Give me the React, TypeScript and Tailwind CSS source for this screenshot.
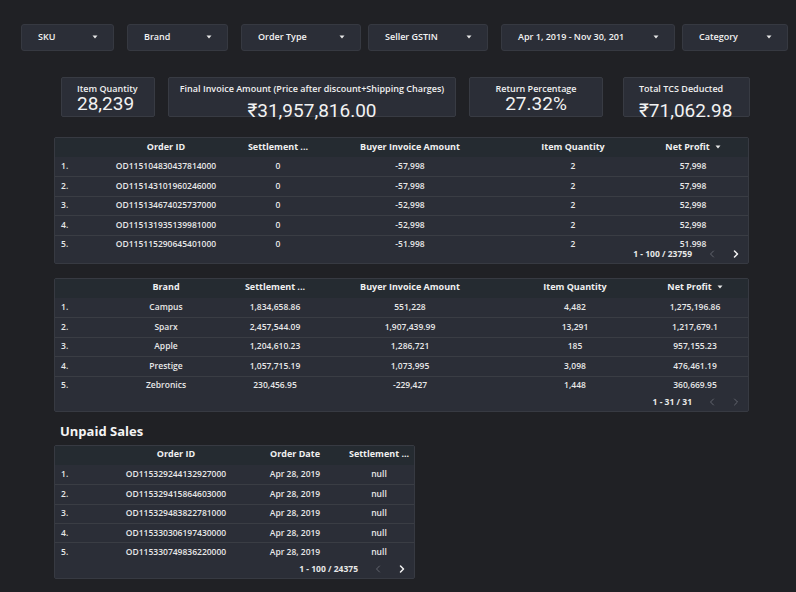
import { ChevronLeft, ChevronRight } from "lucide-react";

type Col = { label: string; w: string; sort?: boolean };

const filters = [
  { label: "SKU", w: "w-[93px]", ml: "ml-[21px]" },
  { label: "Brand", w: "w-[101px]", ml: "ml-[13px]" },
  { label: "Order Type", w: "w-[120px]", ml: "ml-[13px]" },
  { label: "Seller GSTIN", w: "w-[120px]", ml: "ml-[7px]" },
  { label: "Apr 1, 2019 - Nov 30, 201", w: "w-[174px]", ml: "ml-[13px]" },
  { label: "Category", w: "w-[106px]", ml: "ml-[7px]" }
];

const orderCols: Col[] = [
  { label: "", w: "w-[46px]" },
  { label: "Order ID", w: "w-[130px]" },
  { label: "Settlement ...", w: "w-[94px]" },
  { label: "Buyer Invoice Amount", w: "w-[170px]" },
  { label: "Item Quantity", w: "w-[156px]" },
  { label: "Net Profit", w: "w-[84px]", sort: true }
];

const orderRows = [
  ["OD115104830437814000", "0", "-57,998", "2", "57,998"],
  ["OD115143101960246000", "0", "-57,998", "2", "57,998"],
  ["OD115134674025737000", "0", "-52,998", "2", "52,998"],
  ["OD115131935139981000", "0", "-52,998", "2", "52,998"],
  ["OD115115290645401000", "0", "-51.998", "2", "51.998"]
];

const brandCols: Col[] = [
  { label: "", w: "w-[46px]" },
  { label: "Brand", w: "w-[130px]" },
  { label: "Settlement ...", w: "w-[88px]" },
  { label: "Buyer Invoice Amount", w: "w-[182px]" },
  { label: "Item Quantity", w: "w-[148px]" },
  { label: "Net Profit", w: "w-[92px]", sort: true }
];

const brandRows = [
  ["Campus", "1,834,658.86", "551,228", "4,482", "1,275,196.86"],
  ["Sparx", "2,457,544.09", "1,907,439.99", "13,291", "1,217,679.1"],
  ["Apple", "1,204,610.23", "1,286,721", "185", "957,155.23"],
  ["Prestige", "1,057,715.19", "1,073,995", "3,098", "476,461.19"],
  ["Zebronics", "230,456.95", "-229,427", "1,448", "360,669.95"]
];

const unpaidCols: Col[] = [
  { label: "", w: "w-[56px]" },
  { label: "Order ID", w: "w-[130px]" },
  { label: "Order Date", w: "w-[108px]" },
  { label: "Settlement ...", w: "w-[60px]" }
];

const unpaidRows = [
  ["OD115329244132927000", "Apr 28, 2019", "null"],
  ["OD115329415864603000", "Apr 28, 2019", "null"],
  ["OD115329483822781000", "Apr 28, 2019", "null"],
  ["OD115330306197430000", "Apr 28, 2019", "null"],
  ["OD115330749836220000", "Apr 28, 2019", "null"]
];

function Caret() {
  return (
    <svg width="6" height="4" viewBox="0 0 6 4" className="shrink-0">
      <path d="M0.5 0.5h5L3 3.5z" fill="#e8e8e8" />
    </svg>
  );
}

function Pager({ text, next, overlap }: { text: string; next: boolean; overlap?: boolean }) {
  return (
    <div
      className={[
        "flex items-center justify-end pr-[6px] text-[8.5px] font-bold leading-[10px] text-[#e8e8e8]",
        overlap ? "-mt-[5px] mb-[4px] h-[10px]" : "h-[16px] pb-[1px]"
      ].join(" ")}
    >
      <span>{text}</span>
      <ChevronLeft size={12} strokeWidth={2} className="ml-[14px] text-[#62656e]" />
      <ChevronRight
        size={12}
        strokeWidth={next ? 3 : 2}
        className={["ml-[12px]", next ? "text-[#f2f2f2]" : "text-[#62656e]"].join(" ")}
      />
    </div>
  );
}

function DataTable({
  cols,
  rows,
  width,
  pager,
  next,
  overlap
}: {
  cols: Col[];
  rows: string[][];
  width: string;
  pager: string;
  next: boolean;
  overlap?: boolean;
}) {
  return (
    <div className={["rounded-[2px] border border-[#373a42] bg-[#2b2e37]", width].join(" ")}>
      <div className="flex h-[19px] items-center bg-[#252b31] pb-[2px] text-[9px] font-bold leading-[12px] text-[#f0f0f0]">
        {cols.map((c, i) => (
          <div key={i} className={["flex shrink-0 items-center justify-center gap-[5px] whitespace-nowrap", c.w].join(" ")}>
            {c.label}
            {c.sort ? <Caret /> : null}
          </div>
        ))}
      </div>
      {rows.map((r, ri) => (
        <div
          key={ri}
          className={[
            "flex h-[19.4px] items-center pb-[2px] text-[8.5px] font-semibold leading-[11px] text-[#e8e8e8]",
            ri > 0 ? "border-t border-[#3a3d44]" : ""
          ].join(" ")}
        >
          <div className={["shrink-0 pl-[6px]", cols[0].w].join(" ")}>{ri + 1}.</div>
          {r.map((v, vi) => (
            <div key={vi} className={["shrink-0 whitespace-nowrap text-center", cols[vi + 1].w].join(" ")}>
              {v}
            </div>
          ))}
        </div>
      ))}
      <Pager text={pager} next={next} overlap={overlap} />
    </div>
  );
}

function Kpi({
  label,
  value,
  w,
  ml,
  align,
  low
}: {
  label: string;
  value: string;
  w: string;
  ml: string;
  align: "left" | "center";
  low?: boolean;
}) {
  return (
    <div
      className={[
        "h-[40px] shrink-0 rounded-[2px] border border-[#383b43] bg-[#2b2e37] pt-[5px]",
        w,
        ml,
        align === "left" ? "pl-[15px] text-left" : "text-center"
      ].join(" ")}
    >
      <div className="text-[9px] font-semibold leading-[11px] text-[#f0f0f0]">{label}</div>
      <div
        className={[
          "font-['Roboto','Noto_Sans',sans-serif] text-[19px] leading-[19px] text-[#f2f2f2]",
          low ? "mt-[7px]" : "mt-0"
        ].join(" ")}
      >
        {value}
      </div>
    </div>
  );
}

export default function App() {
  return (
    <div className="h-[592px] w-[796px] overflow-hidden bg-[#202125] font-['Open_Sans','Noto_Sans',sans-serif] text-[#e8e8e8]">
      <div className="flex pt-[24px]">
        {filters.map((f) => (
          <div
            key={f.label}
            className={[
              "flex h-[27px] shrink-0 items-center justify-between rounded-[3px] border border-[#363941] bg-[#2b2e37] pb-[2px] pl-[16px] pr-[15px] text-[9px] font-semibold leading-[12px] text-[#f2f2f2]",
              f.w,
              f.ml
            ].join(" ")}
          >
            <span className="whitespace-nowrap">{f.label}</span>
            <Caret />
          </div>
        ))}
      </div>

      <div className="mt-[26px] flex">
        <Kpi label="Item Quantity" value="28,239" w="w-[94px]" ml="ml-[61px]" align="left" />
        <Kpi
          label="Final Invoice Amount (Price after discount+Shipping Charges)"
          value="₹31,957,816.00"
          w="w-[288px]"
          ml="ml-[13px]"
          align="center"
          low
        />
        <Kpi label="Return Percentage" value="27.32%" w="w-[134px]" ml="ml-[13px]" align="center" />
        <Kpi label="Total TCS Deducted" value="₹71,062.98" w="w-[127px]" ml="ml-[20px]" align="left" low />
      </div>

      <div className="ml-[54px] mt-[20px]">
        <DataTable cols={orderCols} rows={orderRows} width="w-[695px]" pager="1 - 100 / 23759" next overlap />
      </div>

      <div className="ml-[54px] mt-[14px]">
        <DataTable cols={brandCols} rows={brandRows} width="w-[695px]" pager="1 - 31 / 31" next={false} />
      </div>

      <div className="ml-[60px] mt-[10px] h-[20px] text-[13px] font-bold leading-[18px] text-[#f4f4f4]">Unpaid Sales</div>

      <div className="ml-[54px] mt-[3px]">
        <DataTable cols={unpaidCols} rows={unpaidRows} width="w-[361px]" pager="1 - 100 / 24375" next />
      </div>
    </div>
  );
}
